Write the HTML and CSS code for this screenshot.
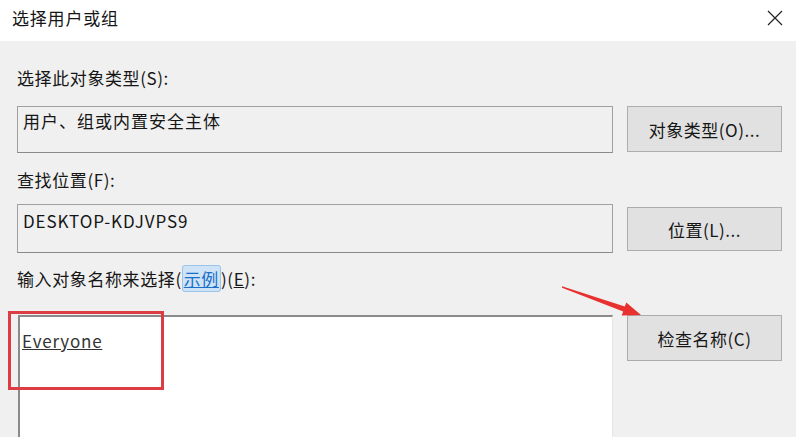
FILE: index.html
```html
<!DOCTYPE html>
<html lang="zh-CN">
<head>
  <meta charset="UTF-8">
  <title>选择用户或组</title>
  <link rel="stylesheet" href="styles.css">
</head>
<body>
<div class="dialog">
  <div class="title-bar">
    <span class="title">选择用户或组</span>
    <svg class="close" width="16" height="16" viewBox="0 0 16 16">
      <path d="M1 1 L15 15 M15 1 L1 15" stroke="#222" stroke-width="1.2" fill="none"/>
    </svg>
  </div>

  <div class="content">
    <div class="label label-type">选择此对象类型(S):</div>
    <div class="row">
      <div class="field field-type">用户、组或内置安全主体</div>
      <button class="btn">对象类型(O)...</button>
    </div>

    <div class="label label-location">查找位置(F):</div>
    <div class="row">
      <div class="field field-location">DESKTOP-KDJVPS9</div>
      <button class="btn btn-location">位置(L)...</button>
    </div>

    <div class="label label-names">输入对象名称来选择(<span class="link">示例</span>)(<u>E</u>):</div>
    <div class="row row-names">
      <div class="names-box"><span class="name">Everyone</span></div>
      <button class="btn">检查名称(C)</button>
    </div>
  </div>

  <!-- annotations -->
  <div class="mark-box"></div>
  <svg class="mark-arrow" width="95" height="45" viewBox="0 0 95 45">
    <polygon points="7,6.3 69.8,26.6 71.3,22.4 86,35 66.7,35.6 68.2,31.4 7,7.7" fill="#e8302e"/>
  </svg>
</div>
</body>
</html>
```

FILE: styles.css
```css
* {
  margin: 0;
  padding: 0;
  box-sizing: border-box;
}

body {
  font-family: "Noto Sans CJK SC", "Noto Sans", sans-serif;
  font-size: 17px;
  line-height: 22px;
  color: #161616;
  background: #f0f0f0;
}

.dialog {
  position: relative;
  width: 796px;
  height: 437px;
  overflow: hidden;
  background: #f0f0f0;
}

.title-bar {
  height: 41px;
  background: #fff;
  display: flex;
  justify-content: space-between;
  align-items: flex-start;
  padding: 7px 13px 0 12px;
}

.title {
  font-size: 17px;
  letter-spacing: 0.8px;
}

.close {
  margin-top: 3px;
}

.content {
  padding: 0 14px 0 17px;
}

.label {
  letter-spacing: 0.6px;
}

.label-type {
  margin-top: 26px;
  margin-bottom: 17px;
}

.label-location {
  margin-top: 16px;
  margin-bottom: 13px;
}

.label-names {
  margin-top: 15px;
  margin-bottom: 25px;
}

.row {
  display: flex;
  gap: 14px;
  align-items: flex-start;
}

.field {
  flex: 1;
  height: 47px;
  border: 1px solid #a0a0a0;
  border-bottom-color: #8a8a8a;
  background: #f0f0f0;
  padding: 3px 5px;
  letter-spacing: 1px;
}

.field-location {
  height: 49px;
  padding-top: 5px;
  letter-spacing: 0.9px;
}

.btn {
  width: 155px;
  height: 46px;
  flex: none;
  border: 1px solid #adadad;
  background: #e1e1e1;
  font-family: inherit;
  font-size: 17px;
  color: #161616;
  letter-spacing: 0.5px;
}

.btn-location {
  height: 44px;
  margin-top: 3px;
}

.link {
  color: #1a6fc9;
  text-decoration: underline;
  background: #cfe3f6;
  border: 1px solid #9cc3e8;
  border-radius: 3px;
  padding: 0 1px;
}

.row-names {
  height: 130px;
}

.names-box {
  flex: 1;
  height: 130px;
  margin-left: 1px;
  background: #fff;
  border-top: 2px solid #8a8a8a;
  border-left: 2px solid #8a8a8a;
  border-right: 1px solid #e6e6e6;
  padding: 13px 2px 0;
}

.name {
  text-decoration: underline;
  color: #333;
  letter-spacing: 0.8px;
}

.mark-box {
  position: absolute;
  left: 8px;
  top: 311px;
  width: 156px;
  height: 79px;
  border: 3px solid #dc3c44;
}

.mark-arrow {
  position: absolute;
  left: 555px;
  top: 280px;
}
```
